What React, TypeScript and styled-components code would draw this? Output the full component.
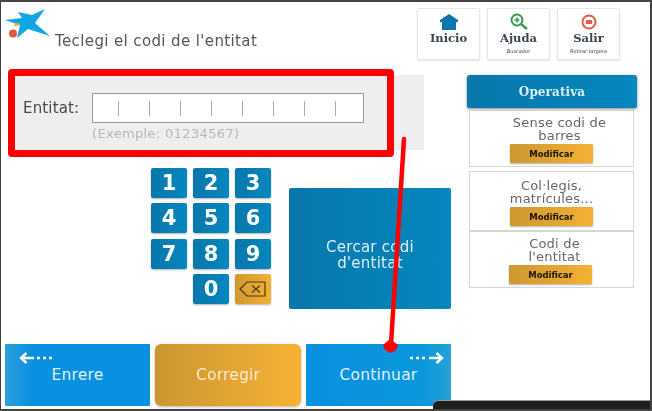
import React from "react";
import styled, { createGlobalStyle } from "styled-components";

const Global = createGlobalStyle`
  html, body { margin: 0; padding: 0; background: #fff; }
  * { box-sizing: border-box; }
`;

const Screen = styled.div`
  position: relative;
  width: 652px;
  height: 411px;
  overflow: hidden;
  background: #fff;
  border-style: solid;
  border-color: #444;
  border-width: 2px 2px 2px 1px;
  padding-left: 4px;
  font-family: "DejaVu Sans", Verdana, sans-serif;
`;

const Blurred = styled.div`
  filter: blur(0.6px);
`;

const Header = styled.header`
  display: flex;
  align-items: flex-start;
  height: 73px;
`;

const Logo = styled.svg`
  width: 46px;
  height: 34px;
  margin-top: 6px;
  flex: none;
`;

const Title = styled.h1`
  margin: 30px 0 0 4px;
  font-size: 15px;
  line-height: 18px;
  font-weight: 400;
  color: #555;
  letter-spacing: 0.38px;
  white-space: nowrap;
  width: 362px;
`;

const Nav = styled.nav`
  display: flex;
  gap: 7px;
  margin-top: 6px;
`;

const NavButton = styled.div`
  width: 63px;
  height: 52px;
  border: 1px solid #e6e6e6;
  border-radius: 2px;
  box-shadow: 0 1px 2px rgba(0, 0, 0, 0.12);
  display: flex;
  flex-direction: column;
  align-items: center;
  padding-top: 4px;
  background: #fff;
`;

const NavLabel = styled.span`
  font-family: "DejaVu Serif", serif;
  font-weight: 700;
  font-size: 11.5px;
  line-height: 13px;
  color: #3c4650;
  margin-top: 1px;
`;

const NavHint = styled.span`
  font-size: 5px;
  line-height: 8px;
  margin-top: 2px;
  color: #444;
  font-style: italic;
  white-space: nowrap;
`;

const Content = styled.main`
  display: flex;
  align-items: flex-start;
`;

const LeftColumn = styled.section`
  width: 446px;
  flex: none;
`;

const EntityPanel = styled.div`
  margin-left: 10px;
  width: 409px;
  height: 75px;
  background: #eee;
  padding: 18px 0 0 8px;
`;

const EntityRow = styled.div`
  display: flex;
  align-items: center;
`;

const EntityLabel = styled.label`
  width: 69px;
  font-size: 15px;
  color: #4a4a4a;
  letter-spacing: 0.15px;
`;

const CodeInput = styled.div`
  width: 272px;
  height: 30px;
  background: #fff;
  border: 1px solid #999;
  display: flex;
  align-items: center;
  padding-left: 25px;
  gap: 30px;
`;

const CodeTick = styled.span`
  width: 1px;
  height: 15px;
  background: #aaa;
  flex: none;
`;

const Example = styled.div`
  margin: 3px 0 0 69px;
  font-size: 13px;
  line-height: 16px;
  letter-spacing: 0.35px;
  color: #b8b8b8;
`;

const MiddleRow = styled.div`
  display: flex;
  align-items: flex-start;
  height: 141px;
  margin-top: 18px;
  padding-left: 146px;
`;

const Keypad = styled.div`
  display: grid;
  grid-template-columns: repeat(3, 36px);
  grid-auto-rows: 30px;
  gap: 5.3px 6px;
  width: 120px;
`;

const Key = styled.div<{ $warn?: boolean; $col?: number }>`
  grid-column: ${(p) => p.$col ?? "auto"};
  border-radius: 2px;
  background: ${(p) =>
    p.$warn
      ? "linear-gradient(90deg,#cf9832,#f4b133)"
      : "linear-gradient(90deg,#0877ab,#0587bf)"};
  box-shadow: 0 1px 2px rgba(0, 0, 0, 0.3);
  color: #fff;
  font-weight: 700;
  font-size: 21px;
  display: flex;
  align-items: center;
  justify-content: center;
`;

const SearchButton = styled.div`
  margin: 20px 0 0 18px;
  width: 162px;
  height: 121px;
  padding-top: 12px;
  border-radius: 2px;
  background: linear-gradient(90deg, #0877ab, #0587bf);
  color: #d8eef8;
  font-size: 15px;
  line-height: 16px;
  text-align: center;
  letter-spacing: 0.25px;
  display: flex;
  align-items: center;
  justify-content: center;
`;

const Footer = styled.div`
  display: flex;
  gap: 5px;
  margin-top: 35px;
`;

const FooterButton = styled.div<{ $kind: "back" | "warn" | "next" }>`
  position: relative;
  width: ${(p) => (p.$kind === "warn" ? "146px" : "145px")};
  height: 62px;
  color: ${(p) => (p.$kind === "warn" ? "#f8ecd4" : "#dff0fb")};
  font-size: 15.5px;
  letter-spacing: 0.2px;
  display: flex;
  align-items: center;
  justify-content: center;
  border-radius: ${(p) => (p.$kind === "warn" ? "6px" : "1px")};
  background: ${(p) =>
    p.$kind === "warn"
      ? "linear-gradient(90deg,#cb9631,#f6b234)"
      : p.$kind === "back"
        ? "linear-gradient(90deg,#2ba0dc,#0990e0 20%,#0990e0)"
        : "linear-gradient(90deg,#0990e0,#0a97dc 80%,#24a2d8)"};
  box-shadow: ${(p) => (p.$kind === "warn" ? "0 1px 3px rgba(0,0,0,.3)" : "none")};
`;

const ArrowMark = styled.svg<{ $side: "left" | "right" }>`
  position: absolute;
  top: 7px;
  ${(p) => (p.$side === "left" ? "left: 14px;" : "right: 7px;")}
  width: 36px;
  height: 14px;
`;

const Sidebar = styled.aside`
  width: 170px;
  margin-left: 16px;
  flex: none;
`;

const SidebarHeader = styled.div`
  height: 33px;
  border-radius: 3px 3px 2px 2px;
  background: linear-gradient(90deg, #0877ab, #0587bf);
  box-shadow: 0 1px 3px rgba(0, 0, 0, 0.5);
  color: #d9f0fa;
  font-family: "DejaVu Serif", serif;
  font-weight: 700;
  font-size: 12px;
  display: flex;
  align-items: center;
  justify-content: center;
  letter-spacing: 0.1px;
`;

const SidebarList = styled.div`
  margin: 2px 3px 0 2px;
  display: flex;
  flex-direction: column;
`;

const SideItem = styled.div<{ $h: number; $gap: number; $top: number }>`
  height: ${(p) => p.$h}px;
  margin-bottom: ${(p) => p.$gap}px;
  border: 1px solid #d6d6d6;
  padding-top: ${(p) => p.$top}px;
  display: flex;
  flex-direction: column;
  align-items: center;
  text-align: center;
`;

const SideText = styled.div<{ $shift: number }>`
  color: #666;
  font-size: 13px;
  line-height: 13px;
  letter-spacing: 0.2px;
  transform: translateX(${(p) => p.$shift}px);
`;

const ModifyButton = styled.div<{ $shift: number }>`
  width: 83px;
  height: 19px;
  margin-top: 2px;
  transform: translateX(${(p) => p.$shift}px);
  border-radius: 1px;
  background: linear-gradient(90deg, #cd9732, #f4b133);
  box-shadow: 0 1px 2px rgba(0, 0, 0, 0.3);
  color: #1a1400;
  font-size: 8.5px;
  font-weight: 700;
  display: flex;
  align-items: center;
  justify-content: center;
`;

const Annotation = styled.div`
  position: absolute;
  left: 7px;
  top: 67px;
  width: 386px;
  height: 88px;
  border: 7px solid #f00;
  border-radius: 4px;
`;

const ArrowOverlay = styled.svg`
  position: absolute;
  left: 370px;
  top: 120px;
  width: 50px;
  height: 240px;
`;

const DarkCorner = styled.div`
  position: absolute;
  left: 432px;
  bottom: -2px;
  width: 220px;
  height: 11px;
  border-top: 1px solid #999;
  background: #1f1f1f;
  border-radius: 6px 0 0 0;
`;

const Arrow = ({ dir }: { dir: "left" | "right" }) => (
  <ArrowMark $side={dir} viewBox="0 0 36 14">
    {dir === "left" ? (
      <g fill="none" stroke="#fff" strokeWidth="2.4">
        <path d="M7.5 2 L2 7 L7.5 12 M2 7 H15" />
        <path d="M18 7 h3 M24 7 h3 M30 7 h3" />
      </g>
    ) : (
      <g fill="none" stroke="#fff" strokeWidth="2.4">
        <path d="M2 7 h3 M8 7 h3 M14 7 h3" />
        <path d="M28.5 2 L34 7 L28.5 12 M21 7 H34" />
      </g>
    )}
  </ArrowMark>
);

const items = [
  { text: ["Sense codi de", "barres"], h: 57, gap: 4, top: 5, textShift: 8, shift: 0 },
  { text: ["Col·legis,", "matrícules..."], h: 60, gap: 0, top: 7, textShift: 0, shift: 0 },
  { text: ["Codi de", "l'entitat"], h: 57, gap: 0, top: 5, textShift: 3, shift: -1 },
];

export default function App() {
  return (
    <>
      <Global />
      <Screen>
        <Blurred>
          <Header>
            <Logo viewBox="0 0 46 34">
              <path
                fill="#12a5e3"
                d="M13 4 L27 7 L40 1 L30 15 L45 28 L23 21 L12 30 L15 17 L0 12 L17 10 Z"
              />
              <rect x="9" y="15.5" width="5" height="2.5" fill="#f4b93a" />
              <circle cx="8" cy="25.5" r="4" fill="#e2563a" />
            </Logo>
            <Title>Teclegi el codi de l'entitat</Title>
            <Nav>
              <NavButton>
                <svg width="20" height="18" viewBox="0 0 20 18">
                  <path fill="#0a77ad" d="M10 1 L19 7 V9 H17 V17 H3 V9 H1 V7 Z" />
                </svg>
                <NavLabel>Inicio</NavLabel>
              </NavButton>
              <NavButton>
                <svg width="22" height="18" viewBox="0 0 22 18">
                  <circle cx="9" cy="7" r="5.5" fill="none" stroke="#3a9a4a" strokeWidth="2" />
                  <path d="M9 4.5 v5 M6.5 7 h5" stroke="#3a9a4a" strokeWidth="1.5" />
                  <path d="M13 11 L19 16" stroke="#3a9a4a" strokeWidth="2.5" />
                </svg>
                <NavLabel>Ajuda</NavLabel>
                <NavHint>Buscador</NavHint>
              </NavButton>
              <NavButton>
                <svg width="20" height="18" viewBox="0 0 20 18">
                  <circle cx="10" cy="9" r="6.5" fill="none" stroke="#e85a48" strokeWidth="2" />
                  <rect x="7" y="7" width="6" height="4" fill="#e85a48" />
                </svg>
                <NavLabel>Salir</NavLabel>
                <NavHint>Retirar targeta</NavHint>
              </NavButton>
            </Nav>
          </Header>
          <Content>
            <LeftColumn>
              <EntityPanel>
                <EntityRow>
                  <EntityLabel>Entitat:</EntityLabel>
                  <CodeInput>
                    {Array.from({ length: 8 }, (_, i) => (
                      <CodeTick key={i} />
                    ))}
                  </CodeInput>
                </EntityRow>
                <Example>(Exemple: 01234567)</Example>
              </EntityPanel>
              <MiddleRow>
                <Keypad>
                  {["1", "2", "3", "4", "5", "6", "7", "8", "9"].map((k) => (
                    <Key key={k}>{k}</Key>
                  ))}
                  <Key $col={2}>0</Key>
                  <Key $warn>
                    <svg width="30" height="20" viewBox="0 0 30 20">
                      <path
                        d="M9 3 H27 V17 H9 L2 10 Z M14 6.5 L22 13.5 M22 6.5 L14 13.5"
                        fill="none"
                        stroke="#4a3a1a"
                        strokeWidth="1.2"
                      />
                    </svg>
                  </Key>
                </Keypad>
                <SearchButton>
                  Cercar codi
                  <br />
                  d'entitat
                </SearchButton>
              </MiddleRow>
              <Footer>
                <FooterButton $kind="back">
                  <Arrow dir="left" />
                  Enrere
                </FooterButton>
                <FooterButton $kind="warn">Corregir</FooterButton>
                <FooterButton $kind="next">
                  <Arrow dir="right" />
                  Continuar
                </FooterButton>
              </Footer>
            </LeftColumn>
            <Sidebar>
              <SidebarHeader>Operativa</SidebarHeader>
              <SidebarList>
                {items.map((it) => (
                  <SideItem key={it.text[0]} $h={it.h} $gap={it.gap} $top={it.top}>
                    <SideText $shift={it.textShift}>
                      {it.text[0]}
                      <br />
                      {it.text[1]}
                    </SideText>
                    <ModifyButton $shift={it.shift}>Modificar</ModifyButton>
                  </SideItem>
                ))}
              </SidebarList>
            </Sidebar>
          </Content>
        </Blurred>
        <Annotation />
        <ArrowOverlay viewBox="0 0 50 240">
          <path d="M33 17 L20 222" stroke="#f00" strokeWidth="4.5" strokeLinecap="round" />
          <path d="M12 223 L19 217 L27 223 L25 228 L19.5 231 L14 228 Z" fill="#f00" />
        </ArrowOverlay>
        <DarkCorner />
      </Screen>
    </>
  );
}
